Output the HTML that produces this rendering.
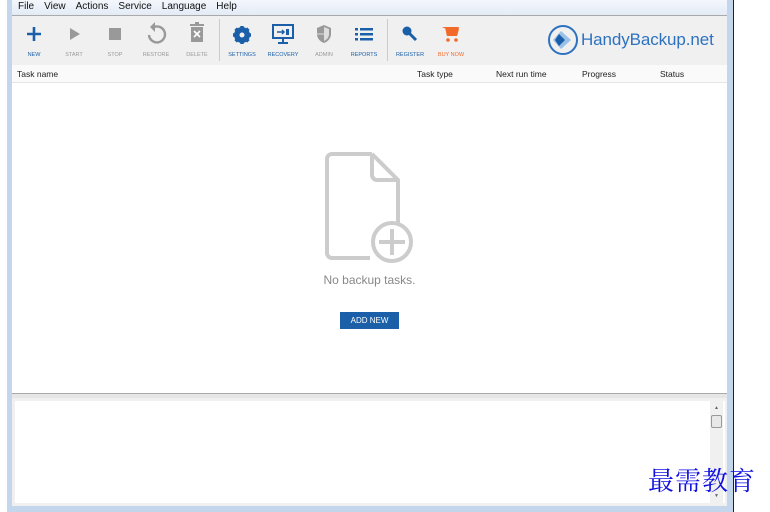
<!DOCTYPE html>
<html><head><meta charset="utf-8"><style>
*{margin:0;padding:0;box-sizing:border-box}
body{width:770px;height:512px;background:#fff;position:relative;overflow:hidden;font-family:"Liberation Sans",sans-serif}
.win{position:absolute;left:7px;top:0;width:727px;height:512px;background:#c4d6ec;border-right:1px solid #222}
.menu{position:absolute;left:12px;top:0;width:715px;height:15px;background:linear-gradient(#f4f7fc,#e3ebf6);font-size:10px;color:#111;line-height:14px}
.menu span{margin-left:6px;margin-right:4px}
.tb{position:absolute;left:12px;top:15px;width:715px;height:50px;background:#f0f0f0;border-top:1px solid #aaa}
.btn{position:absolute;top:0;width:40px;text-align:center;font-size:5.5px;color:#999}
.btn svg{display:block;margin:9px auto 0}
.btn .l{position:absolute;top:36px;left:0;width:40px}
.blue{color:#1a5fa8}.or{color:#f26a2a}
.sep{position:absolute;top:3px;width:1px;height:42px;background:#ccc}
.hdr{position:absolute;left:12px;top:65px;width:715px;height:18px;background:#fafafa;border-bottom:1px solid #e6e6e6;font-size:8.5px;color:#222;line-height:18px}
.hdr span{position:absolute}
.main{position:absolute;left:12px;top:83px;width:715px;height:310px;background:#fff}
.split{position:absolute;left:12px;top:393px;width:715px;height:5px;background:#e6e6e6;border-top:1px solid #aaa}
.log{position:absolute;left:12px;top:398px;width:715px;height:108px;background:#f0f0f0}
.logi{position:absolute;left:3px;top:3px;width:710px;height:102px;background:#fff}
.sb{position:absolute;right:2px;top:0;width:13px;height:102px;background:#f0f0f0}
.thumb{position:absolute;left:1px;top:14px;width:11px;height:13px;background:#e8e8e8;border:1px solid #999;border-radius:2px}
.wm{position:absolute;left:648px;top:465px;font-family:"Noto Serif CJK SC",serif;font-size:26px;color:#1010e0;letter-spacing:1px;line-height:30px}
</style></head><body>
<div class="win"></div>
<div class="menu"><span>File</span><span>View</span><span>Actions</span><span>Service</span><span>Language</span><span>Help</span></div>
<div class="tb">
 <div class="btn blue" style="left:2px"><svg width="18" height="18" viewBox="0 0 18 18"><path d="M9 2v14M2 9h14" stroke="#1a5fa8" stroke-width="2.6"/></svg><div class="l">NEW</div></div>
 <div class="btn" style="left:42px"><svg width="18" height="18" viewBox="0 0 18 18"><path d="M5 3l10 6-10 6z" fill="#999"/></svg><div class="l">START</div></div>
 <div class="btn" style="left:83px"><svg width="18" height="18" viewBox="0 0 18 18"><rect x="3" y="3" width="12" height="12" fill="#999"/></svg><div class="l">STOP</div></div>
 <div class="btn" style="left:124px"><svg width="22" height="22" viewBox="0 0 22 22" style="margin-top:6px"><path d="M9 5A8 8 0 1 1 4 13" fill="none" stroke="#999" stroke-width="2.4"/><path d="M10 0v10l-5-5z" fill="#999"/></svg><div class="l">RESTORE</div></div>
 <div class="btn" style="left:165px"><svg width="18" height="22" viewBox="0 0 18 22" style="margin-top:6px"><rect x="2" y="2" width="14" height="2" fill="#999"/><rect x="7" y="0" width="4" height="2" fill="#999"/><rect x="3" y="5" width="12" height="15" fill="#999"/><path d="M6 9l6 6M12 9l-6 6" stroke="#fff" stroke-width="1.6"/></svg><div class="l">DELETE</div></div>
 <div class="sep" style="left:207px"></div>
 <div class="btn blue" style="left:210px"><svg width="20" height="20" viewBox="0 0 20 20"><circle cx="10" cy="10" r="6" fill="none" stroke="#1a5fa8" stroke-width="4"/><g stroke="#1a5fa8" stroke-width="3.5"><path d="M10 1v18M1 10h18M3.6 3.6l12.8 12.8M16.4 3.6L3.6 16.4"/></g><circle cx="10" cy="10" r="2.5" fill="#f0f0f0"/></svg><div class="l">SETTINGS</div></div>
 <div class="btn blue" style="left:251px"><svg width="24" height="22" viewBox="0 0 24 22" style="margin-top:7px"><rect x="2" y="2" width="20" height="13" fill="none" stroke="#1a5fa8" stroke-width="2"/><path d="M12 15v4M7 20h10" stroke="#1a5fa8" stroke-width="2"/><path d="M6 9h7M11 7l2 2-2 2" stroke="#1a5fa8" stroke-width="1.5" fill="none"/><rect x="15" y="6" width="3" height="6" fill="#1a5fa8"/></svg><div class="l">RECOVERY</div></div>
 <div class="btn" style="left:292px"><svg width="18" height="20" viewBox="0 0 18 20" style="margin-top:8px"><path d="M9 1L2 4v6c0 5 4 8 7 9 3-1 7-4 7-9V4z" fill="#999"/><path d="M9 3v14c2-1 5-3 5-7V5z" fill="#ddd"/><path d="M2 10h7" stroke="#ddd"/></svg><div class="l">ADMIN</div></div>
 <div class="btn blue" style="left:332px"><svg width="20" height="18" viewBox="0 0 20 18"><g fill="#1a5fa8"><rect x="1" y="3" width="3" height="2.5"/><rect x="6" y="3" width="13" height="2.5"/><rect x="1" y="8" width="3" height="2.5"/><rect x="6" y="8" width="13" height="2.5"/><rect x="1" y="13" width="3" height="2.5"/><rect x="6" y="13" width="13" height="2.5"/></g></svg><div class="l">REPORTS</div></div>
 <div class="sep" style="left:375px"></div>
 <div class="btn blue" style="left:378px"><svg width="18" height="18" viewBox="0 0 18 18"><circle cx="6" cy="6" r="4.5" fill="#1a5fa8"/><path d="M8 8l7 7" stroke="#1a5fa8" stroke-width="3"/></svg><div class="l">REGISTER</div></div>
 <div class="btn or" style="left:419px"><svg width="20" height="20" viewBox="0 0 20 20" style="margin-top:8px"><path d="M1 3h3l2 9h10l2-7H5" fill="#f26a2a"/><path d="M4 3h14l-2 9H6z" fill="#f26a2a"/><circle cx="7" cy="16" r="1.8" fill="#f26a2a"/><circle cx="15" cy="16" r="1.8" fill="#f26a2a"/></svg><div class="l">BUY NOW</div></div>
 <div style="position:absolute;left:536px;top:9px;width:30px;height:30px;border-radius:50%;border:2px solid #2d72c0"></div>
 <svg style="position:absolute;left:541px;top:15px" width="20" height="18" viewBox="0 0 20 18"><path d="M8 0l10 9-10 9-8-9z" fill="#9bc0e8"/><path d="M6 3l6 6-6 6-4-6z" fill="#1a5fa8"/></svg>
 <div style="position:absolute;left:569px;top:14px;font-size:17px;color:#2d72c0;letter-spacing:-0.1px">HandyBackup.net</div>
</div>
<div class="hdr"><span style="left:5px">Task name</span><span style="left:405px">Task type</span><span style="left:484px">Next run time</span><span style="left:570px">Progress</span><span style="left:648px">Status</span></div>
<div class="main">
 <svg style="position:absolute;left:312px;top:68px" width="92" height="116" viewBox="0 0 92 116"><path d="M48 3H8a5 5 0 0 0-5 5v94a5 5 0 0 0 5 5h38M48 3l26 26v46M48 3v21a5 5 0 0 0 5 5h21" fill="none" stroke="#ccc" stroke-width="4" stroke-linejoin="round"/><circle cx="68" cy="91" r="19" fill="#fff" stroke="#ccc" stroke-width="4"/><path d="M68 78v26M55 91h26" stroke="#ccc" stroke-width="4"/></svg>
 <div style="position:absolute;left:0;width:715px;top:190px;text-align:center;font-size:12px;color:#888">No backup tasks.</div>
 <div style="position:absolute;left:328px;top:229px;width:59px;height:17px;background:#1a5fa8;color:#fff;font-size:8px;text-align:center;line-height:17px">ADD NEW</div>
</div>
<div class="split"></div>
<div class="log"><div class="logi"><div class="sb"><div style="position:absolute;left:4px;top:4px;font-size:5px;color:#666">▲</div><div class="thumb"></div><div style="position:absolute;left:4px;top:92px;font-size:5px;color:#666">▼</div></div></div></div>
<div class="wm">最需教育</div>
</body></html>
